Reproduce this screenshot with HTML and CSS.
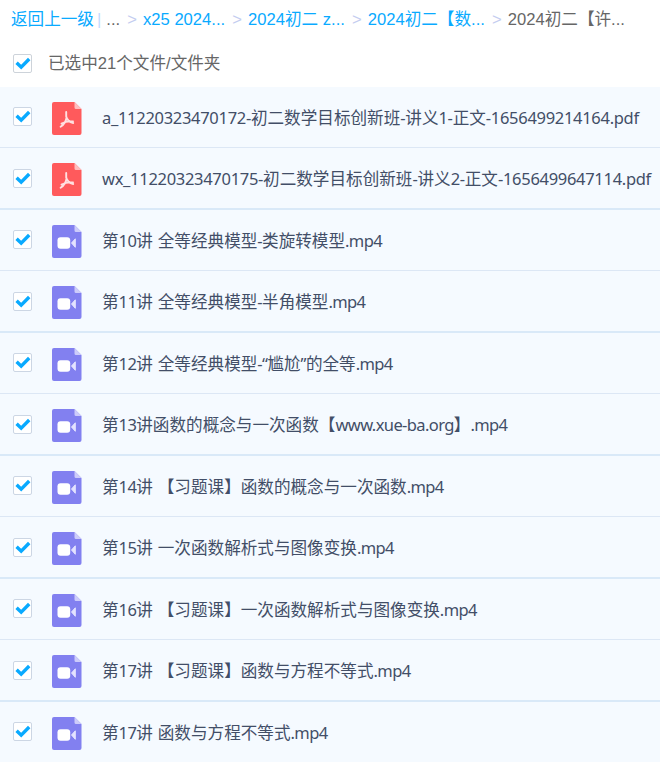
FILE: index.html
```
<!DOCTYPE html>
<html lang="zh-CN">
<head>
    <meta charset="UTF-8">
    <meta name="viewport" content="width=device-width, initial-scale=1.0">
    <title>文件列表</title>
    <link rel="stylesheet" href="styles.css">
</head>
<body>
    <!-- 图标 -->
    <svg class="sprite" aria-hidden="true">
        <symbol id="check" viewBox="0 0 19 19">
            <path d="M3.600 8.700 L8.200 13.200 L16.200 5" fill="none" stroke="#09aaff" stroke-width="3.400"/>
        </symbol>
        <symbol id="pdf" viewBox="0 0 30 33">
            <path d="M2 0H22.500L29.500 7V31a2 2 0 0 1-2 2H2A2 2 0 0 1 0 31V2A2 2 0 0 1 2 0z" fill="#ff5a5c"/>
            <path d="M22.500 0L29.500 7H24a1.500 1.500 0 0 1-1.500-1.500z" fill="#ffbdbe"/>
            <path d="M14.200 10v4.500c.8 3.200 3.500 5.800 7 6.500M14.600 15.500c-.6 3.700-2.800 7.200-6 9.300M9.500 21.500c3.500-1.700 7.700-2.500 11.500-2" fill="none" stroke="#ffe0e0" stroke-width="1.900" stroke-linecap="round"/>
        </symbol>
        <symbol id="video" viewBox="0 0 30 33">
            <path d="M2 0H22.500L29.500 7V31a2 2 0 0 1-2 2H2A2 2 0 0 1 0 31V2A2 2 0 0 1 2 0z" fill="#8280f0"/>
            <path d="M22.500 0L29.500 7H24a1.500 1.500 0 0 1-1.500-1.500z" fill="#cdccfa"/>
            <rect x="5.500" y="12.300" width="12.700" height="11.500" rx="3" fill="#fff"/>
            <path d="M19.500 18L23.300 13.800V22.300z" fill="#e4e3ff" stroke="#e4e3ff" stroke-width="1" stroke-linejoin="round"/>
        </symbol>
    </svg>

    <nav class="crumbs">
        <a>返回上一级</a>
        <span class="bar">|</span>
        <span class="dots">...</span>
        <span class="sep">&gt;</span>
        <a>x25 2024...</a>
        <span class="sep">&gt;</span>
        <a>2024初二 z...</a>
        <span class="sep">&gt;</span>
        <a>2024初二【数...</a>
        <span class="sep">&gt;</span>
        <span class="current">2024初二【许...</span>
    </nav>

    <div class="selected">
        <span class="checkbox"><svg><use href="#check"/></svg></span>
        <span class="count">已选中21个文件/文件夹</span>
    </div>

    <ul class="file-list">
        <li class="file pdf">
            <span class="checkbox"><svg><use href="#check"/></svg></span>
            <svg class="icon"><use href="#pdf"/></svg>
            <span class="name"><b>a_11220323470172-</b>初二数学目标创新班<b>-</b>讲义<b>1-</b>正文<b>-1656499214164.pdf</b></span>
        </li>
        <li class="file pdf">
            <span class="checkbox"><svg><use href="#check"/></svg></span>
            <svg class="icon"><use href="#pdf"/></svg>
            <span class="name"><b>wx_11220323470175-</b>初二数学目标创新班<b>-</b>讲义<b>2-</b>正文<b>-1656499647114.pdf</b></span>
        </li>
        <li class="file">
            <span class="checkbox"><svg><use href="#check"/></svg></span>
            <svg class="icon"><use href="#video"/></svg>
            <span class="name">第<b>10</b>讲<b> </b>全等经典模型<b>-</b>类旋转模型<b>.mp4</b></span>
        </li>
        <li class="file">
            <span class="checkbox"><svg><use href="#check"/></svg></span>
            <svg class="icon"><use href="#video"/></svg>
            <span class="name">第<b>11</b>讲<b> </b>全等经典模型<b>-</b>半角模型<b>.mp4</b></span>
        </li>
        <li class="file">
            <span class="checkbox"><svg><use href="#check"/></svg></span>
            <svg class="icon"><use href="#video"/></svg>
            <span class="name">第<b>12</b>讲<b> </b>全等经典模型<b>-“</b>尴尬<b>”</b>的全等<b>.mp4</b></span>
        </li>
        <li class="file">
            <span class="checkbox"><svg><use href="#check"/></svg></span>
            <svg class="icon"><use href="#video"/></svg>
            <span class="name">第<b>13</b>讲函数的概念与一次函数【<b>www.xue-ba.org</b>】<b>.mp4</b></span>
        </li>
        <li class="file">
            <span class="checkbox"><svg><use href="#check"/></svg></span>
            <svg class="icon"><use href="#video"/></svg>
            <span class="name">第<b>14</b>讲<b> </b>【习题课】函数的概念与一次函数<b>.mp4</b></span>
        </li>
        <li class="file">
            <span class="checkbox"><svg><use href="#check"/></svg></span>
            <svg class="icon"><use href="#video"/></svg>
            <span class="name">第<b>15</b>讲<b> </b>一次函数解析式与图像变换<b>.mp4</b></span>
        </li>
        <li class="file">
            <span class="checkbox"><svg><use href="#check"/></svg></span>
            <svg class="icon"><use href="#video"/></svg>
            <span class="name">第<b>16</b>讲<b> </b>【习题课】一次函数解析式与图像变换<b>.mp4</b></span>
        </li>
        <li class="file">
            <span class="checkbox"><svg><use href="#check"/></svg></span>
            <svg class="icon"><use href="#video"/></svg>
            <span class="name">第<b>17</b>讲<b> </b>【习题课】函数与方程不等式<b>.mp4</b></span>
        </li>
        <li class="file">
            <span class="checkbox"><svg><use href="#check"/></svg></span>
            <svg class="icon"><use href="#video"/></svg>
            <span class="name">第<b>17</b>讲<b> </b>函数与方程不等式<b>.mp4</b></span>
        </li>
    </ul>
</body>
</html>
```
FILE: styles.css
```
* {
    box-sizing: border-box;
}

body {
    margin: 0;
    height: 762px;
    overflow: hidden;
    background-color: #fff;
    color: #666;
    font-family: "Liberation Sans", "Noto Sans CJK SC", sans-serif;
    font-size: 16.6px;
    font-weight: 400;
}

.sprite {
    display: none;
}

.crumbs {
    display: flex;
    align-items: baseline;
    height: 38px;
    padding: 6px 0 0 11px;
    white-space: nowrap;
}

.crumbs a {
    color: #09aaff;
}

.bar {
    margin: 0 5px 0 3px;
    color: #c4dbfe;
}

.sep {
    margin: 0 6px 0 7.2px;
    color: #c4cdf0;
}

.selected {
    display: flex;
    align-items: center;
    height: 49px;
    padding: 1px 0 0 13px;
    gap: 16px;
}

.count {
    margin-bottom: 3px;
}

.checkbox {
    flex: none;
    width: 19px;
    height: 19px;
    border: 1px solid #cdd3da;
    border-radius: 2px;
    background-color: #fff;
}

.checkbox svg {
    display: block;
    width: 19px;
    height: 19px;
    margin: -1px;
}

.file-list {
    margin: 0;
    padding: 0;
    list-style: none;
}

.file {
    display: flex;
    align-items: center;
    height: 61px;
    padding-left: 13px;
    border-bottom: 1px solid #dce7f5;
    background-color: #f5faff;
    color: #424e67;
    white-space: nowrap;
}

.file:nth-child(even) {
    height: 62px;
    border-bottom: 2px solid #d9e9f8;
}

.file .checkbox {
    margin-bottom: 1px;
    border-color: #ccd6e4;
}

.file:nth-child(even) .checkbox {
    margin-bottom: 0;
}

.icon {
    flex: none;
    width: 30px;
    height: 33px;
    margin: 3px 20px 0;
}

.name b {
    font-family: "Noto Sans", sans-serif;
    font-size: 16.5px;
    font-weight: 400;
    letter-spacing: -0.6px;
    word-spacing: 1.2px;
}

.pdf .name b {
    letter-spacing: -0.3px;
}
```
